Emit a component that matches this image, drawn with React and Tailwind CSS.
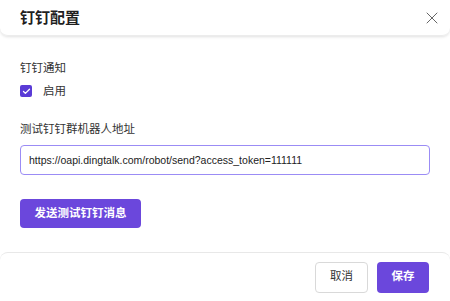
import React from 'react';
import { X, Check } from 'lucide-react';

const font = { fontFamily: '"Liberation Sans", "Noto Sans CJK SC", sans-serif' };

const App = () => {
  const [enabled, setEnabled] = React.useState(true);
  const [url, setUrl] = React.useState('https://oapi.dingtalk.com/robot/send?access_token=111111');

  return (
    <div className="w-[450px] h-[301px] bg-white flex flex-col overflow-hidden text-[#1f1f1f]" style={font}>
      {/* header */}
      <div className="h-[36px] shrink-0 flex items-center justify-between pl-[20px] pr-[8px] rounded-b-[8px] shadow-[0_1px_3px_rgba(0,0,0,0.12)] border-b border-[#ececec]">
        <h2 className="text-[15px] font-bold leading-none">钉钉配置</h2>
        <X className="w-[20px] h-[20px] text-[#666]" strokeWidth={1.2} />
      </div>

      {/* body */}
      <div className="flex-1 px-[20px] pt-[25px]">
        <div className="text-[11.5px] leading-[14px] text-[#333]">钉钉通知</div>
        <label className="flex items-center gap-[11px] mt-[9px] cursor-pointer">
          <span
            onClick={() => setEnabled(!enabled)}
            className="w-[12px] h-[12px] rounded-[2px] bg-[#5a3bd6] flex items-center justify-center"
          >
            {enabled && <Check className="w-[9px] h-[9px] text-white" strokeWidth={3.5} />}
          </span>
          <span className="text-[11.5px] leading-[14px] text-[#333]">启用</span>
        </label>
        <div className="text-[11.5px] leading-[14px] text-[#333] mt-[24px]">测试钉钉群机器人地址</div>
        <input
          value={url}
          onChange={e => setUrl(e.target.value)}
          className="mt-[9px] w-[410px] h-[30px] border border-[#9b8cf5] rounded-[4px] px-[8px] text-[10.5px] text-[#222] outline-none"
          style={font}
        />
        <button className="mt-[24px] h-[29px] w-[121px] bg-[#6b47dc] text-white text-[11.5px] font-bold rounded-[4px]">
          发送测试钉钉消息
        </button>
      </div>

      {/* footer */}
      <div className="h-[49px] shrink-0 flex items-center justify-end gap-[9px] pr-[21px] border-t border-[#e8e8e8] rounded-t-[8px]">
        <button className="w-[53px] h-[31px] border border-[#d9d9d9] rounded-[4px] text-[11.5px] text-[#333] bg-white">取消</button>
        <button className="w-[52px] h-[31px] rounded-[4px] text-[11.5px] font-bold text-white bg-[#6b47dc]">保存</button>
      </div>
    </div>
  );
};

export default App;
